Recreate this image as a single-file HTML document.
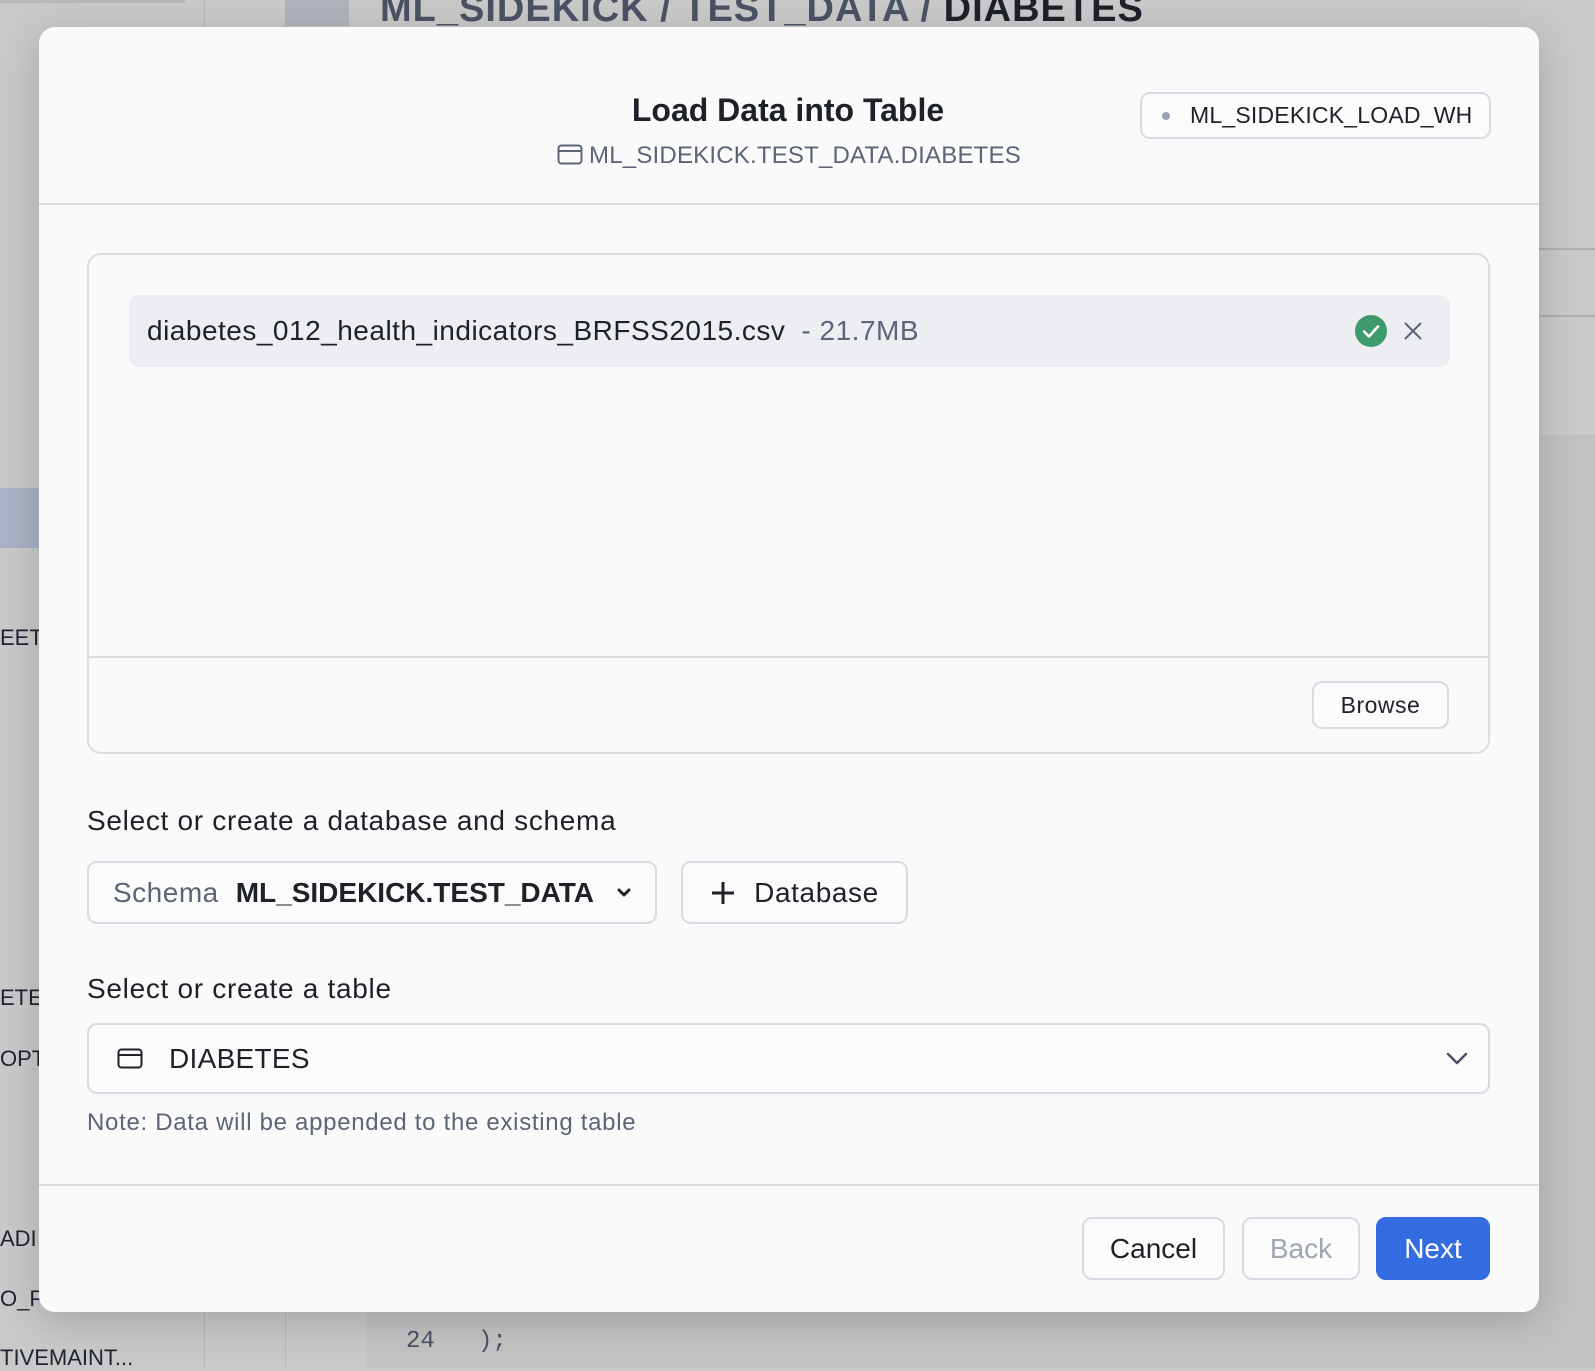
<!DOCTYPE html>
<html><head><meta charset="utf-8"><style>
*{box-sizing:border-box;margin:0;padding:0}
body{width:1595px;height:1368px;overflow:hidden;background:#c9c9c9;font-family:"Liberation Sans",sans-serif;position:relative;color:#1e2430}
.a{position:absolute}
.btn{position:absolute;border:2px solid #d7dbe3;border-radius:10px;background:#fbfbfc;display:flex;align-items:center;justify-content:center}
</style></head><body>
<div class="a" style="left:0;top:0;width:185px;height:3px;background:#b5b7bb"></div>
<div class="a" style="left:204px;top:0;width:1px;height:1368px;background:#b8b8b8"></div>
<div class="a" style="left:285px;top:0;width:1px;height:1368px;background:#b8b8b8"></div>
<div class="a" style="left:367px;top:1300px;width:1228px;height:68px;background:#c3c3c3"></div>
<div class="a" style="left:285px;top:0;width:64px;height:26px;background:#b0b3ba"></div>
<div class="a" style="left:380px;top:-12px;font-size:38px;font-weight:bold;color:#4a5264;letter-spacing:1px">ML_SIDEKICK / TEST_DATA / <span style="color:#1e2128">DIABETES</span></div>
<div class="a" style="left:0;top:488px;width:39px;height:60px;background:#a9b2c6"></div>
<div class="a" style="left:1539px;top:248px;width:56px;height:2px;background:#b0b0b0"></div>
<div class="a" style="left:1539px;top:315px;width:56px;height:2px;background:#b0b0b0"></div>
<div class="a" style="left:1539px;top:435px;width:56px;height:933px;background:#c2c2c2"></div>
<div class="a" style="left:0;top:625px;font-size:22px">EET</div>
<div class="a" style="left:0;top:985px;font-size:22px">ETE</div>
<div class="a" style="left:0;top:1046px;font-size:22px">OPT</div>
<div class="a" style="left:0;top:1226px;font-size:22px">ADI</div>
<div class="a" style="left:0;top:1286px;font-size:22px">O_PI</div>
<div class="a" style="left:0;top:1345px;font-size:22px">TIVEMAINT...</div>
<div class="a" style="left:406px;top:1328px;font-size:24px;font-family:'Liberation Mono',monospace;color:#4a5264">24&nbsp;&nbsp;&nbsp;);</div>

<div class="a" style="left:39px;top:27px;width:1500px;height:1285px;background:#fafafa;border-radius:16px;box-shadow:0 10px 40px rgba(0,0,0,.18)">
  <div class="a" style="left:0;top:65px;width:1500px;text-align:center;font-size:32px;font-weight:bold;color:#1e2128;padding-right:2px">Load Data into Table</div>
  <div class="a" style="left:0;top:115px;width:1500px;text-align:center;font-size:24px;color:#5c6477;letter-spacing:.2px">
    <svg width="26" height="22" viewBox="0 0 26 22" style="vertical-align:-3px;margin-right:6px"><rect x="1.5" y="1.5" width="23" height="18" rx="3" fill="none" stroke="#5c6477" stroke-width="2"/><line x1="1.5" y1="7" x2="24.5" y2="7" stroke="#5c6477" stroke-width="2"/></svg>ML_SIDEKICK.TEST_DATA.DIABETES</div>
  <div class="btn" style="left:1101px;top:65px;width:351px;height:47px;font-size:23px;color:#1e2128;justify-content:flex-start;padding-left:20px;letter-spacing:.2px"><span style="width:8px;height:8px;border-radius:50%;background:#9aa3b3;margin-right:20px"></span>ML_SIDEKICK_LOAD_WH</div>
  <div class="a" style="left:0;top:176px;width:1500px;height:2px;background:#d9dde4"></div>

  <div class="a" style="left:48px;top:226px;width:1403px;height:501px;border:2px solid #d9dde4;border-radius:14px">
    <div class="a" style="left:40px;top:40px;width:1321px;height:72px;background:#edeef2;border-radius:10px;display:flex;align-items:center;padding-left:18px;font-size:28px;letter-spacing:.5px;color:#1e2128">diabetes_012_health_indicators_BRFSS2015.csv<span style="color:#5c6477;margin-left:16px">- 21.7MB</span>
      <svg class="a" style="left:1226px;top:20px" width="32" height="32" viewBox="0 0 32 32"><circle cx="16" cy="16" r="16" fill="#3c9a6b"/><path d="M9 16.5l5 5 9-10" fill="none" stroke="#fff" stroke-width="2.6" stroke-linecap="round" stroke-linejoin="round"/></svg>
      <svg class="a" style="left:1274px;top:26px" width="20" height="20" viewBox="0 0 20 20"><path d="M2 2L18 18M18 2L2 18" stroke="#5c6477" stroke-width="2"/></svg>
    </div>
    <div class="a" style="left:0;top:401px;width:1399px;height:2px;background:#d9dde4"></div>
    <div class="btn" style="left:1223px;top:426px;width:137px;height:48px;font-size:23px;color:#1e2128;letter-spacing:.5px">Browse</div>
  </div>

  <div class="a" style="left:48px;top:778px;font-size:28px;letter-spacing:.7px;color:#1e2128">Select or create a database and schema</div>
  <div class="btn" style="left:48px;top:834px;width:570px;height:63px;font-size:28px;justify-content:flex-start;padding-left:24px"><span style="color:#5c6477;letter-spacing:.5px">Schema</span><b style="margin-left:17px;color:#1e2128">ML_SIDEKICK.TEST_DATA</b>
    <svg style="margin-left:22px" width="16" height="12" viewBox="0 0 16 12"><path d="M3 3l5 5 5-5" fill="none" stroke="#1e2128" stroke-width="3" stroke-linecap="round" stroke-linejoin="round"/></svg></div>
  <div class="btn" style="left:642px;top:834px;width:227px;height:63px;font-size:28px;color:#1e2128;letter-spacing:.6px"><svg width="26" height="26" viewBox="0 0 26 26" style="margin-right:18px"><path d="M13 2v22M2 13h22" stroke="#1e2128" stroke-width="3"/></svg>Database</div>

  <div class="a" style="left:48px;top:946px;font-size:28px;letter-spacing:.7px;color:#1e2128">Select or create a table</div>
  <div class="btn" style="left:48px;top:996px;width:1403px;height:71px;font-size:28px;justify-content:flex-start;padding-left:28px;color:#1e2128;letter-spacing:.3px">
    <svg width="26" height="22" viewBox="0 0 26 22" style="margin-right:26px"><rect x="1.5" y="1.5" width="23" height="18" rx="3" fill="none" stroke="#1e2128" stroke-width="2"/><line x1="1.5" y1="7" x2="24.5" y2="7" stroke="#1e2128" stroke-width="2"/></svg>DIABETES
    <svg class="a" style="left:1356px;top:26px" width="24" height="16" viewBox="0 0 24 16"><path d="M3 3l9 9 9-9" fill="none" stroke="#4a5264" stroke-width="2.5" stroke-linecap="round" stroke-linejoin="round"/></svg></div>
  <div class="a" style="left:48px;top:1082px;font-size:24px;letter-spacing:.7px;color:#5c6477">Note: Data will be appended to the existing table</div>

  <div class="a" style="left:0;top:1157px;width:1500px;height:2px;background:#d9dde4"></div>
  <div class="btn" style="left:1043px;top:1190px;width:143px;height:63px;font-size:28px;color:#1e2128">Cancel</div>
  <div class="btn" style="left:1203px;top:1190px;width:118px;height:63px;font-size:28px;color:#9ea5b3">Back</div>
  <div class="btn" style="left:1337px;top:1190px;width:114px;height:63px;font-size:28px;color:#fff;background:#336be0;border-color:#336be0">Next</div>
</div>
</body></html>
